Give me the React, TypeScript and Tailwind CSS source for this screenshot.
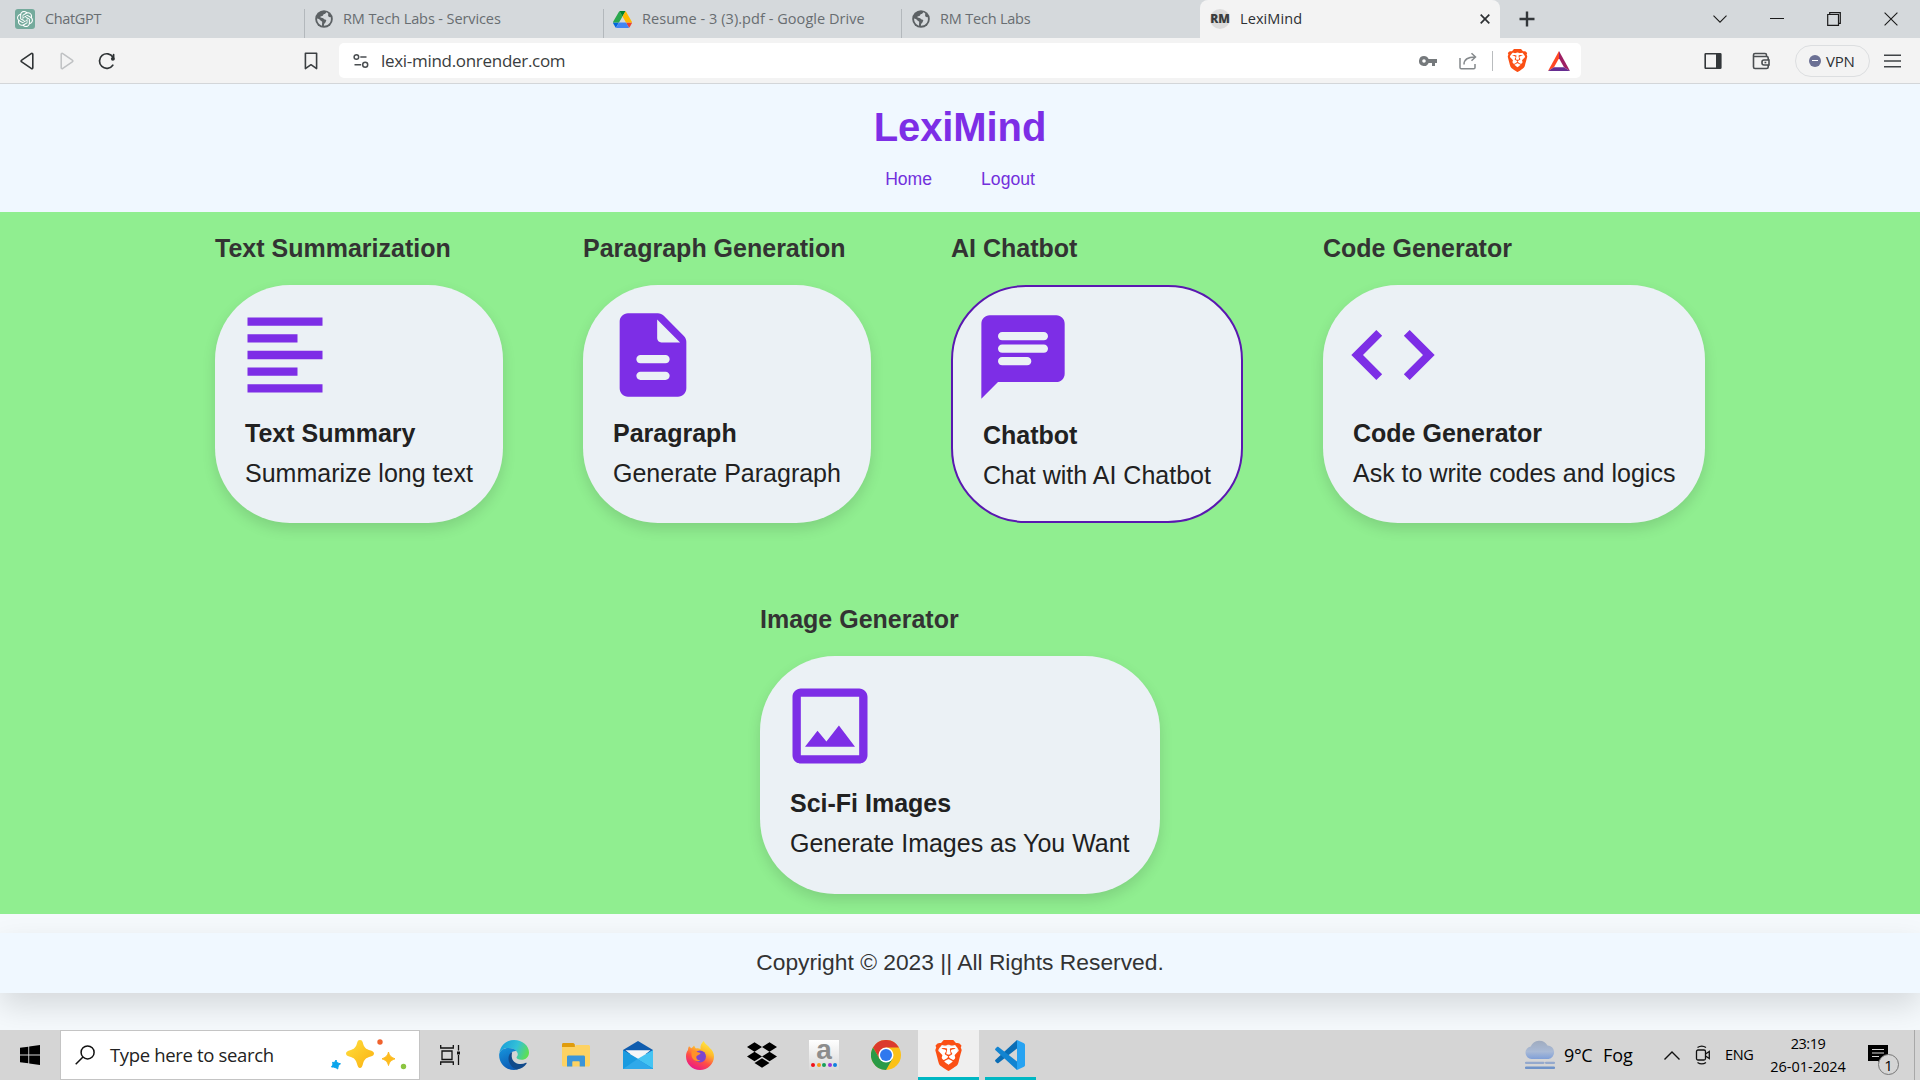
import type { ReactNode } from "react";
import { SiBrave, SiDropbox, SiOpenai } from "react-icons/si";

function GlobeIcon() {
  return (
    <svg viewBox="0 0 20 20" className="h-[18px] w-[18px] shrink-0">
      <circle cx="10" cy="10" r="9.8" fill="#5c6164" />
      <path
        d="M12.5 2.4c-.6 1.2-1.2 1.8-2.4 2.1-.9.2-.8 1.5-1.5 2-.8.6-2.3.4-2.7 1.1-.3.8 1 1.2 2.3 1.2 1.6 0 1.4 1.6 2.8 1.7 1.5.1 1.8 1 1.2 2.1-.5 1-.4 1.5-1.4 2.2-.8.6-.8 1.6-.9 2.8 4.3.1 7.800-3 7.800-7.500 0-.9-.1-1.500-.4-2.200-1.300.3-2.200-.2-2.600-1.200-.4-1.100.3-1.900 0-2.700-.3-.8-1.200-1.200-2.200-1.600z"
        fill="#d5d9dc"
      />
      <path d="M2.300 9.500c1.400.2 2.700.8 3.500 1.900.8 1.100 2.300.9 2.200 2.200-.1 1.200-.3 2.700-.2 3.800-3.300-1-5.600-4-5.500-7.900z" fill="#d5d9dc" />
    </svg>
  );
}

function DriveIcon() {
  return (
    <svg viewBox="0 0 87.300 78" className="h-[17px] w-[19px] shrink-0" preserveAspectRatio="none">
      <path d="m6.600 66.850 3.850 6.650c.8 1.400 1.950 2.500 3.300 3.300l13.750-23.800h-27.500c0 1.550.4 3.100 1.200 4.500z" fill="#0066da" />
      <path d="m43.650 25-13.750-23.800c-1.350.8-2.500 1.900-3.300 3.300l-25.400 44a9.060 9.060 0 0 0 -1.200 4.500h27.500z" fill="#2ba84e" />
      <path d="m73.550 76.800c1.350-.8 2.500-1.900 3.300-3.300l1.600-2.750 7.650-13.250c.8-1.400 1.200-2.950 1.200-4.500h-27.500l5.850 11.500z" fill="#ea4335" />
      <path d="m43.650 25 13.750-23.800c-1.350-.8-2.900-1.200-4.500-1.200h-18.500c-1.600 0-3.150.45-4.500 1.200z" fill="#00832d" />
      <path d="m59.800 53h-32.300l-13.750 23.800c1.350.8 2.900 1.200 4.500 1.200h50.800c1.600 0 3.150-.45 4.500-1.200z" fill="#4285f4" />
      <path d="m73.400 26.500-12.700-22c-.8-1.400-1.950-2.500-3.300-3.300l-13.750 23.800 16.150 28h27.450c0-1.550-.4-3.100-1.200-4.500z" fill="#ffba00" />
    </svg>
  );
}

function Tab({ icon, label, box, text }: { icon: ReactNode; label: string; box: string; text: string }) {
  return (
    <div className={`flex h-full shrink-0 items-center ${box}`}>
      {icon}
      <span className={`text-[14.5px] leading-5 whitespace-nowrap text-[#686d71] ${text}`}>{label}</span>
    </div>
  );
}

function TabStrip() {
  return (
    <div className="flex h-[38px] bg-[#d5d9dc]">
      <Tab
        box="w-[304px] pl-[15px]"
        text="ml-[10px] tracking-[-0.35px]"
        label="ChatGPT"
        icon={
          <span className="flex h-5 w-5 shrink-0 items-center justify-center rounded-[3px] bg-[#74aa9c]">
            <SiOpenai className="h-4 w-4 text-white" />
          </span>
        }
      />
      <div className="mt-[9px] w-px bg-[#b3b8bc]" />
      <Tab box="w-[298px] pl-[10px]" text="ml-[10px] tracking-[-0.1px]" label="RM Tech Labs - Services" icon={<GlobeIcon />} />
      <div className="mt-[9px] w-px bg-[#b3b8bc]" />
      <Tab box="w-[297px] pl-[9px]" text="ml-[10px] tracking-[0.05px]" label="Resume - 3 (3).pdf - Google Drive" icon={<DriveIcon />} />
      <div className="mt-[9px] w-px bg-[#b3b8bc]" />
      <Tab box="w-[298px] pl-[10px]" text="ml-[10px] tracking-[-0.2px]" label="RM Tech Labs" icon={<GlobeIcon />} />
      <div className="flex h-full w-[300px] shrink-0 items-center rounded-t-lg bg-[#f3f3f3] pl-[9px]">
        <span className="flex h-5 w-[22px] items-center justify-center">
          <span className="flex h-5 w-5 items-center justify-center rounded-full bg-[#dcdcdc]">
            <span className="text-[12px] leading-5 font-extrabold tracking-[-0.2px] text-[#3a3d3e]">RM</span>
          </span>
        </span>
        <span className="ml-[9px] text-[14.5px] leading-5 tracking-[0.1px] text-[#2d3033]">LexiMind</span>
        <svg viewBox="0 0 10 10" className="mr-[10px] ml-auto h-[10px] w-[10px]" stroke="#2d3033" strokeWidth="1.7">
          <path d="M.7.7l8.600 8.600M9.300.7L.7 9.300" />
        </svg>
      </div>
      <svg viewBox="0 0 16 16" className="mt-[11px] ml-[19px] h-4 w-4" stroke="#33373a" strokeWidth="2.400">
        <path d="M8 .5v15M.5 8h15" />
      </svg>
      <div className="mr-[22px] ml-auto flex items-center text-[#1b1b1b]">
        <svg viewBox="0 0 14 8" className="h-2 w-[14px]" fill="none" stroke="currentColor" strokeWidth="1.100">
          <path d="M.5.7L7 7.200 13.500.7" />
        </svg>
        <svg viewBox="0 0 14 14" className="ml-[43px] h-[14px] w-[14px]" stroke="currentColor" strokeWidth="1">
          <path d="M0 6.500h14" />
        </svg>
        <svg viewBox="0 0 14 14" className="ml-[43px] h-[14px] w-[14px]" fill="none" stroke="currentColor" strokeWidth="1.200">
          <path d="M.7 2.500h10.800v10.800H.7zM2.700 2.500V.7h10.600v10.600h-1.800" />
        </svg>
        <svg viewBox="0 0 14 14" className="ml-[43px] h-[14px] w-[14px]" stroke="currentColor" strokeWidth="1.100">
          <path d="M.6.6l12.800 12.800M13.400.6L.6 13.400" />
        </svg>
      </div>
    </div>
  );
}

function BraveLion({ className }: { className: string }) {
  return (
    <span className={`relative block shrink-0 ${className}`}>
      <svg viewBox="0 0 24 24" className="absolute inset-0 h-full w-full">
        <path d="M6 5h12l1 6-3 8-4 3-4-3-3-8z" fill="#fff" />
      </svg>
      <SiBrave className="relative h-full w-full text-[#fb4f14]" />
    </span>
  );
}

function Toolbar() {
  return (
    <div className="flex h-[46px] items-center border-b border-[#d3d6d9] bg-[#f3f3f3]">
      <svg viewBox="0 0 14 18" className="ml-5 h-[18px] w-[14px]" fill="none" stroke="#2f3335" strokeWidth="1.600" strokeLinejoin="round">
        <path d="M12.800 2.300v13.400c0 1-.9 1.300-1.600.7L1.700 9.900c-.8-.5-.8-1.300 0-1.800l9.500-6.500c.7-.5 1.600-.2 1.600.7z" />
      </svg>
      <svg viewBox="0 0 14 18" className="ml-[26px] h-[18px] w-[14px]" fill="none" stroke="#bfc1c3" strokeWidth="1.500" strokeLinejoin="round">
        <path d="M1.200 2.300v13.400c0 1 .9 1.300 1.600.7l9.500-6.500c.8-.5.8-1.300 0-1.800L2.800 1.600c-.7-.5-1.600-.2-1.600.7z" />
      </svg>
      <svg viewBox="0 0 18 18" className="ml-[24px] h-[18px] w-[18px]" fill="none" stroke="#2f3335" strokeWidth="1.700">
        <path d="M14.800 13.200A7.300 7.300 0 1 1 15 5.200M15.600 2.500v4.700" strokeLinecap="round" />
        <circle cx="14.800" cy="6.800" r="1.900" fill="#2f3335" stroke="none" />
      </svg>
      <svg viewBox="0 0 14 18" className="ml-[188px] h-[18px] w-[14px]" fill="none" stroke="#3b3f42" strokeWidth="1.600" strokeLinejoin="round">
        <path d="M1.400 1.200h11.200v15.400L7 12.700l-5.600 3.900z" />
      </svg>
      <div className="ml-[21px] flex h-[35px] w-[1242px] items-center rounded-[5px] bg-white">
        <svg viewBox="0 0 16 16" className="ml-[14px] h-4 w-4" fill="none" stroke="#4a4e51" strokeWidth="1.500">
          <circle cx="3.400" cy="4" r="2.300" />
          <path d="M7.300 4H13.500M1.500 11.800h6.700" />
          <circle cx="12.200" cy="11.800" r="2.500" />
        </svg>
        <span className="ml-3 text-[17px] leading-6 tracking-[-0.3px] text-[#3a3d40]">lexi-mind.onrender.com</span>
        <svg viewBox="0 0 18 12" className="ml-auto h-3 w-[18px]" fill="#75797c">
          <path fillRule="evenodd" d="M5 1a5 5 0 1 0 4.600 7H13v3h3V8h2V4H9.600A5 5 0 0 0 5 1zm0 3.200a1.800 1.800 0 1 1 0 3.600 1.800 1.800 0 0 1 0-3.600z" />
        </svg>
        <svg viewBox="0 0 18 18" className="ml-[22px] h-[18px] w-[18px]" fill="none" stroke="#85898c" strokeWidth="1.500">
          <path d="M1 6v9.500c0 .8.500 1.300 1.300 1.300h12.400c.8 0 1.300-.5 1.300-1.300V12M5 12.500c0-5 3.500-7.500 11-7.500M12.500 1.200L16.500 5l-4 3.800" />
        </svg>
        <div className="mr-[13px] ml-[15px] h-5 w-px bg-[#b9bcbe]" />
        <BraveLion className="h-[23px] w-[23px]" />
        <svg viewBox="0 0 22 20" className="mr-[11px] ml-[19px] h-5 w-[22px]">
          <path d="M11 0L0 20l6-3.700 5-9z" fill="#ff4724" />
          <path d="M11 0l11 20-6-3.700-5-9z" fill="#9e1f63" />
          <path d="M0 20h22l-6-3.700H6z" fill="#662d91" />
        </svg>
      </div>
      <svg viewBox="0 0 18 18" className="ml-[123px] h-[18px] w-[18px]" fill="none" stroke="#33373a" strokeWidth="1.600">
        <rect x="1.200" y="1.700" width="15.600" height="14.600" rx=".6" />
        <path d="M12 2h4.500v14H12z" fill="#33373a" stroke="none" />
      </svg>
      <svg viewBox="0 0 18 18" className="ml-[30px] h-[18px] w-[18px]" fill="none" stroke="#4a4e51" strokeWidth="1.600">
        <path d="M1.500 4.500h13c.9 0 1.700.6 1.700 1.500v9c0 .9-.8 1.500-1.700 1.500H3c-.9 0-1.500-.6-1.500-1.500V3c0-.9.6-1.500 1.500-1.500h10c.8 0 1.500.6 1.500 1.500v1.500" />
        <path d="M17 8h-5c-1.200 0-2 .8-2 2v1c0 1.200.8 2 2 2h5z" fill="#f3f3f3" />
        <path d="M12.500 10.500h1.800" />
      </svg>
      <div className="ml-[25px] flex h-8 w-[75px] items-center rounded-full border border-[#dcdee0] pl-[13px]">
        <span className="flex h-3 w-3 items-center justify-center rounded-full bg-[#6b7094]">
          <span className="h-[1.500px] w-[6px] bg-white" />
        </span>
        <span className="ml-[5px] text-[15px] leading-5 tracking-[-0.2px] text-[#2d3033]">VPN</span>
      </div>
      <svg viewBox="0 0 18 14" className="ml-[14px] h-[14px] w-[18px]" stroke="#3f4346" strokeWidth="1.600">
        <path d="M0 1.200h17M0 7h17M0 12.800h17" />
      </svg>
    </div>
  );
}

const ICONS = {
  align: "M15 15H3v2h12v-2zm0-8H3v2h12V7zM3 13h18v-2H3v2zm0 8h18v-2H3v2zM3 3v2h18V3H3z",
  doc: "M14.590 2.590c-.38-.38-.89-.59-1.420-.59H6c-1.100 0-2 .9-2 2v16c0 1.100.89 2 1.990 2H18c1.100 0 2-.9 2-2V8.830c0-.53-.21-1.040-.59-1.410l-4.820-4.830zM15 18H9c-.55 0-1-.45-1-1s.45-1 1-1h6c.55 0 1 .45 1 1s-.45 1-1 1zm0-4H9c-.55 0-1-.45-1-1s.45-1 1-1h6c.55 0 1 .45 1 1s-.45 1-1 1zm-2-6V3.500L18.500 9H14c-.55 0-1-.45-1-1z",
  chat: "M20 2H4c-1.100 0-1.990.9-1.990 2L2 22l4-4h14c1.100 0 2-.9 2-2V4c0-1.100-.9-2-2-2zM7 9h10c.55 0 1 .45 1 1s-.45 1-1 1H7c-.55 0-1-.45-1-1s.45-1 1-1zm6 5H7c-.55 0-1-.45-1-1s.45-1 1-1h6c.55 0 1 .45 1 1s-.45 1-1 1zm4-6H7c-.55 0-1-.45-1-1s.45-1 1-1h10c.55 0 1 .45 1 1s-.45 1-1 1z",
  code: "M9.400 16.600 4.800 12l4.600-4.600L8 6l-6 6 6 6 1.400-1.400zm5.200 0 4.600-4.600-4.600-4.600L16 6l6 6-6 6-1.400-1.400z",
  image: "M19 5v14H5V5h14m0-2H5c-1.100 0-2 .9-2 2v14c0 1.100.9 2 2 2h14c1.100 0 2-.9 2-2V5c0-1.100-.9-2-2-2zm-4.860 8.860-3 3.870L9 13.140 6 17h12l-3.860-5.140z",
};

interface Feature {
  heading: string;
  title: string;
  text: string;
  icon: keyof typeof ICONS;
  width: string;
  gap: string;
  active?: boolean;
}

const ROWS: Feature[][] = [
  [
    { heading: "Text Summarization", title: "Text Summary", text: "Summarize long text", icon: "align", width: "w-[288px]", gap: "mt-2" },
    { heading: "Paragraph Generation", title: "Paragraph", text: "Generate Paragraph", icon: "doc", width: "w-[288px]", gap: "mt-2" },
    { heading: "AI Chatbot", title: "Chatbot", text: "Chat with AI Chatbot", icon: "chat", width: "w-[292px]", gap: "mt-2", active: true },
    { heading: "Code Generator", title: "Code Generator", text: "Ask to write codes and logics", icon: "code", width: "w-[382px]", gap: "mt-2" },
  ],
  [{ heading: "Image Generator", title: "Sci-Fi Images", text: "Generate Images as You Want", icon: "image", width: "w-[400px]", gap: "mt-[7px]" }],
];

function FeatureCard({ f }: { f: Feature }) {
  return (
    <div className={f.width}>
      <h2 className="mt-[21px] mb-[22px] text-[25px] leading-[30px] font-bold text-[#333]">{f.heading}</h2>
      <div
        className={`h-[238px] rounded-[75px] bg-[#ebf1f5] pt-5 whitespace-nowrap text-[#212121] ${
          f.active ? "border-2 border-[#5a18b0]" : "shadow-[0_6px_14px_rgba(0,0,0,0.12)]"
        }`}
      >
        <svg viewBox="0 0 24 24" className="ml-5 h-[100px] w-[100px]" fill="#7d2ee6">
          <path d={ICONS[f.icon]} />
        </svg>
        <h3 className={`ml-[30px] text-[25px] leading-10 font-bold ${f.gap}`}>{f.title}</h3>
        <p className="ml-[30px] text-[25px] leading-10">{f.text}</p>
      </div>
    </div>
  );
}

function Page() {
  return (
    <div className="h-[946px] overflow-hidden bg-[#f5f9fc] font-['Liberation_Sans',Arial,sans-serif]">
      <header className="h-32 bg-[#f0f8ff] pt-5 text-center text-[#7d2ee6]">
        <h1 className="text-[40px] leading-[46px] font-bold tracking-[-0.1px]">LexiMind</h1>
        <nav className="mt-[19px] flex justify-center gap-[49px] text-[17.600px] leading-5 text-[#7230dc]">
          <a>Home</a>
          <a>Logout</a>
        </nav>
      </header>
      <main className="flex h-[702px] flex-col gap-[60px] bg-[#90ee90]">
        {ROWS.map((row, i) => (
          <div key={i} className="flex justify-center gap-20">
            {row.map((f) => (
              <FeatureCard key={f.heading} f={f} />
            ))}
          </div>
        ))}
      </main>
      <div className="h-[116px] overflow-hidden pt-[19px]">
        <footer className="flex h-[60px] items-center justify-center bg-[#f0f8ff] pb-[2px] text-[22.800px] leading-7 text-[#333] shadow-[0_13px_31px_rgba(0,0,0,0.13)]">
          Copyright © 2023 || All Rights Reserved.
        </footer>
      </div>
    </div>
  );
}

function Slot({ children, className = "" }: { children: ReactNode; className?: string }) {
  return <div className={`flex h-[50px] w-[62px] shrink-0 items-center justify-center ${className}`}>{children}</div>;
}

function TaskbarApps() {
  return (
    <div className="flex">
      <Slot>
        <svg viewBox="0 0 30 30" className="h-[30px] w-[30px]">
          <defs>
            <linearGradient id="edgeTop" x1="0" y1=".3" x2="1" y2=".6">
              <stop offset="0" stopColor="#1a9fd9" />
              <stop offset=".55" stopColor="#33c1d8" />
              <stop offset="1" stopColor="#5fe04f" />
            </linearGradient>
            <linearGradient id="edgeLeft" x1="0" y1="0" x2=".4" y2="1">
              <stop offset="0" stopColor="#1696dd" />
              <stop offset="1" stopColor="#0c5cb5" />
            </linearGradient>
          </defs>
          <path d="M.4 13C1.300 5.500 7.500 0 15 0c8.500 0 15 5.800 15 12.500 0 4.500-3.300 7.300-7.500 7.300-3.300 0-5-1-5-2.200 0-1 1.300-1.400 1.300-3.400C18.800 11 14.500 8 9.500 8 5 8 1.700 10 .4 13z" fill="url(#edgeTop)" />
          <path d="M.2 14C1 10.300 4.700 8 9.500 8c3.300 0 6.300 1.200 8 3.200-4-.7-7 2.500-7 6.300 0 6.500 4.500 10.800 8.500 11.800-1.300.5-2.700.7-4 .7C6 30 -.5 22.500.2 14z" fill="url(#edgeLeft)" />
          <path d="M13.200 12c-2.500 1.200-3.700 3.500-3.700 6.500 0 5.500 4 9.800 8.500 11.100 4.200-.8 7.500-3 9.600-6.100.3-.5-.1-1-.7-.7-5.700 2.700-12.400.7-13.800-4.300-.7-2.500-.3-4.700.1-6.500z" fill="#114a8b" />
        </svg>
      </Slot>
      <Slot>
        <svg viewBox="0 0 28 24" className="h-6 w-7">
          <path d="M0 1.500C0 .7.600 0 1.400 0h9.400c.8 0 1.600.6 1.800 1.300L13.500 5H0z" fill="#e09c0c" />
          <path d="M0 4h12.500l1.500-2h12.500c.8 0 1.500.7 1.500 1.500V22c0 .8-.7 1.500-1.500 1.500h-25C.7 23.500 0 22.800 0 22z" fill="#fdd263" />
          <path d="M5 23.500V14c0-.8.600-1.400 1.400-1.400h15.200c.8 0 1.400.6 1.400 1.400v9.500h-5.300v-4.200c0-.6-.4-1-1-1h-5.400c-.6 0-1 .4-1 1v4.200z" fill="#3b95d9" />
        </svg>
      </Slot>
      <Slot>
        <svg viewBox="0 0 30 28" className="h-7 w-[30px]">
          <path d="M0 9L15 0l15 9v4H0z" fill="#0f5cae" />
          <path d="M2.500 9.200h25L15 19z" fill="#f4f6f8" />
          <path d="M0 9l30 17.500V28H0z" fill="#1a9be0" />
          <path d="M30 9v18.500L14.500 18z" fill="#45c4f3" />
          <path d="M0 28h30L14.500 18z" fill="#2fa9ea" />
        </svg>
      </Slot>
      <Slot>
        <svg viewBox="0 0 28 29" className="h-[29px] w-7">
          <defs>
            <linearGradient id="fox" x1=".8" y1="0" x2=".3" y2="1">
              <stop offset="0" stopColor="#fff044" />
              <stop offset=".35" stopColor="#ffbb2b" />
              <stop offset=".65" stopColor="#ff4f45" />
              <stop offset="1" stopColor="#e8158c" />
            </linearGradient>
          </defs>
          <path d="M17.700 0c1 3 4.500 4.500 6.300 7.200 2.300 1.800 4 4.800 4 8.300C28 23 21.700 29 14 29S0 23 0 15.500c0-3 .8-5 2-6.500 0-1.500.3-2.700 1-3.700 1 .7 1.600 1.200 2.200 2 1-.9 1.800-1 2.800-2.800.7 1 .9 2 2 3 1.700-.3 3-.2 4.500.4C14 5 15.500 2 17.700 0z" fill="url(#fox)" />
          <circle cx="14" cy="15.500" r="6" fill="#7d45cf" />
          <path d="M5.500 10c3-.8 4.500 0 6.300 1.200 1.700.2 2.700.5 2.700 1.300-1 1.500-3 1.300-4 2.800-.7 2 .8 4.200 4 4.200-3.500 2-9-.8-9-5.500z" fill="#ff9228" />
        </svg>
      </Slot>
      <Slot>
        <SiDropbox className="h-[30px] w-[30px] text-black" />
      </Slot>
      <Slot>
        <div className="flex h-[30px] w-[30px] flex-col items-center bg-gradient-to-b from-white to-[#d9d9d9]">
          <span className="h-[22.500px] font-['Liberation_Sans',Arial,sans-serif] text-[28px] leading-[20px] font-bold text-[#8d8d8d]">a</span>
          <div className="flex gap-[1.500px]">
            <span className="h-1 w-1 rounded-full bg-[#f01018]" />
            <span className="h-1 w-1 rounded-full bg-[#f59a1a]" />
            <span className="h-1 w-1 rounded-full bg-[#18a05a]" />
            <span className="h-1 w-1 rounded-full bg-[#9a38d8]" />
            <span className="h-1 w-1 rounded-full bg-[#1080e0]" />
          </div>
        </div>
      </Slot>
      <Slot>
        <svg viewBox="0 0 48 48" className="h-[30px] w-[30px]">
          <circle cx="24" cy="24" r="24" fill="#fbc116" />
          <path d="M24 12h20.800A24 24 0 0 0 3.200 12l10.400 18z" fill="#db3a2d" />
          <path d="M34.400 30L24 48A24 24 0 0 1 3.200 12l10.400 18z" fill="#2a9a47" />
          <circle cx="24" cy="24" r="12" fill="#fff" />
          <circle cx="24" cy="24" r="9.600" fill="#2f78ee" />
        </svg>
      </Slot>
      <div className="ml-px flex h-[50px] w-[61px] items-center justify-center border-b-[3px] border-[#00b7c3] bg-[#efefef] pt-[3px] pr-px">
        <BraveLion className="h-[31px] w-[31px]" />
      </div>
      <div className="ml-[6px] flex h-[50px] w-[51px] items-center justify-center border-b-[3px] border-[#00b7c3] pt-[3px] pr-px">
        <svg viewBox="0 0 30 30" className="h-[30px] w-[30px]">
          <path d="M22 0v8.500L3.500 23c-.5.400-1 .4-1.500 0L.5 21.600c-.6-.5-.6-1.300 0-1.900z" fill="#0a6db5" />
          <path d="M22 30v-8.500L3.500 7c-.5-.4-1-.4-1.500 0L.5 8.400c-.6.5-.6 1.300 0 1.900z" fill="#1284d1" />
          <path d="M22 0l7 3.200c.6.300 1 .9 1 1.500v20.600c0 .6-.4 1.200-1 1.500L22 30z" fill="#27a3f2" />
        </svg>
      </div>
    </div>
  );
}

function Taskbar() {
  return (
    <div className="flex h-[50px] bg-[#d5d5d5] text-black">
      <div className="flex w-[60px] items-center justify-center">
        <svg viewBox="0 0 20 20" className="h-5 w-5">
          <path d="M0 2.800L8.300 1.700v7.900H0zM9.200 1.500L20 0v9.600H9.200zM0 10.400h8.300v7.900L0 17.200zM9.200 10.400H20V20L9.200 18.500z" />
        </svg>
      </div>
      <div className="flex w-[360px] items-center border border-[#c4c4c4] bg-white pl-[14px]">
        <svg viewBox="0 0 20 20" className="h-5 w-5" fill="none" stroke="#111" strokeWidth="1.500">
          <circle cx="12.600" cy="7.400" r="6.500" />
          <path d="M8 12L.7 19.300" />
        </svg>
        <span className="ml-[15px] text-[18.500px] leading-6 tracking-[-0.34px] text-[#222]">Type here to search</span>
        <svg viewBox="0 0 78 38" className="mr-[11px] ml-auto h-[38px] w-[78px]">
          <defs>
            <linearGradient id="spark" x1="0" y1="0" x2="1" y2="1">
              <stop offset="0" stopColor="#ffdf3d" />
              <stop offset="1" stopColor="#fbb010" />
            </linearGradient>
          </defs>
          <path d="M30 4c1.500 0 2.300.8 2.800 2.500 1.300 5 2.700 6.500 8 8 1.800.5 3.200 1.500 3.200 3s-1.400 2.500-3.200 3c-5.300 1.500-6.700 3-8 8C32.300 30.200 31.500 32 30 32s-2.300-1.800-2.800-3.500c-1.300-5-2.700-6.500-8-8-1.800-.5-3.200-1.500-3.200-3s1.400-2.500 3.200-3c5.300-1.500 6.700-3 8-8C27.700 4.800 28.500 4 30 4z" fill="url(#spark)" />
          <path d="M58.500 16c1 3.800 2.200 5 6.500 6.800-4.300 1.700-5.500 3-6.500 6.700-1-3.700-2.200-5-6.500-6.700 4.300-1.800 5.500-3 6.500-6.800z" fill="#fdbb1e" stroke="#fdbb1e" strokeLinejoin="round" />
          <path d="M6 24c.8 2.700 1.500 3 4.500 3.800-1.800 1.200-2.500 2-2.800 5.200C5.800 31.500 4.500 31 1.500 31c1.200-1.700 1.800-2.500 1-4.700 2 .4 2.700-.2 3.500-2.300z" fill="#0aa5ec" stroke="#0aa5ec" strokeLinejoin="round" />
          <circle cx="50" cy="6" r="2.700" fill="#f0622d" />
          <circle cx="73.500" cy="30.500" r="2.700" fill="#8bc541" />
        </svg>
      </div>
      <div className="flex w-[63px] items-center justify-center pr-[3px]">
        <svg viewBox="0 0 21 20" className="h-5 w-[21px]" fill="none" stroke="#111" strokeWidth="1.300">
          <path d="M.7 0v3h12.600V0M2 6h10v8.500H2zM.7 20v-3h12.600v3M18.500 0v5.500M18.500 10v10" />
          <path d="M17 6.500h3v3h-3z" fill="#111" stroke="none" />
        </svg>
      </div>
      <TaskbarApps />
      <div className="ml-auto flex items-center">
        <svg viewBox="0 0 30 30" className="h-[30px] w-[30px]">
          <defs>
            <linearGradient id="fog" x1="0" y1="0" x2="0" y2="1">
              <stop offset="0" stopColor="#9fabbf" />
              <stop offset=".6" stopColor="#a9bad6" />
              <stop offset="1" stopColor="#7f9fd8" />
            </linearGradient>
          </defs>
          <path d="M6.500 19a6.300 6.300 0 0 1-.8-12.500A9.300 9.300 0 0 1 22.500 5.500 6.800 6.800 0 0 1 23.500 19z" fill="url(#fog)" />
          <path d="M1 22.800h17.500M21 22.800h8" stroke="#94a9cd" strokeWidth="2.200" strokeLinecap="round" />
          <path d="M1 27.800h28" stroke="#6f93c9" strokeWidth="2.400" strokeLinecap="round" />
        </svg>
        <span className="ml-[9px] w-[39px] text-[18px] leading-6 tracking-[-0.4px]">9°C</span>
        <span className="w-[61px] text-[18px] leading-6">Fog</span>
        <svg viewBox="0 0 16 9" className="h-[9px] w-4" fill="none" stroke="#111" strokeWidth="1.400">
          <path d="M.5 8.500L8 1l7.500 7.500" />
        </svg>
        <svg viewBox="0 0 16 20" className="ml-[15px] h-5 w-4" fill="none" stroke="#111" strokeWidth="1.300">
          <rect x="1.500" y="5" width="9" height="10" rx="1.500" />
          <path d="M10.500 9l3.800-2.500v7L10.500 11M2.500 2.500C5 .8 8.500.8 11 2.500M2.500 17.500c2.500 1.700 6 1.700 8.500 0" />
        </svg>
        <span className="ml-[14px] w-[45px] text-[14.500px] leading-5 tracking-[-0.400px]">ENG</span>
        <div className="flex w-[76px] flex-col items-center text-[14.500px] leading-[23px]">
          <span className="tracking-[-0.500px]">23:19</span>
          <span className="whitespace-nowrap">26-01-2024</span>
        </div>
        <div className="relative ml-[22px] h-[50px] w-[46px]">
          <svg viewBox="0 0 20 20" className="mt-[15px] h-5 w-5">
            <path d="M0 0h20v16h-6v4l-4-4H0z" />
            <path d="M4 4.500h12M4 8h12M4 11.500h7" stroke="#d5d5d5" strokeWidth="1.100" />
          </svg>
          <span className="absolute top-6 left-[10px] flex h-[21px] w-[21px] items-center justify-center rounded-full border border-[#777] bg-[#d5d5d5] text-[15px] leading-5">
            1
          </span>
        </div>
        <div className="mr-[5px] h-full w-px bg-[#a8a8a8]" />
      </div>
    </div>
  );
}

export default function App() {
  return (
    <div className="h-[1080px] w-[1920px] overflow-hidden font-['Open_Sans','Noto_Sans',sans-serif]">
      <TabStrip />
      <Toolbar />
      <Page />
      <Taskbar />
    </div>
  );
}
